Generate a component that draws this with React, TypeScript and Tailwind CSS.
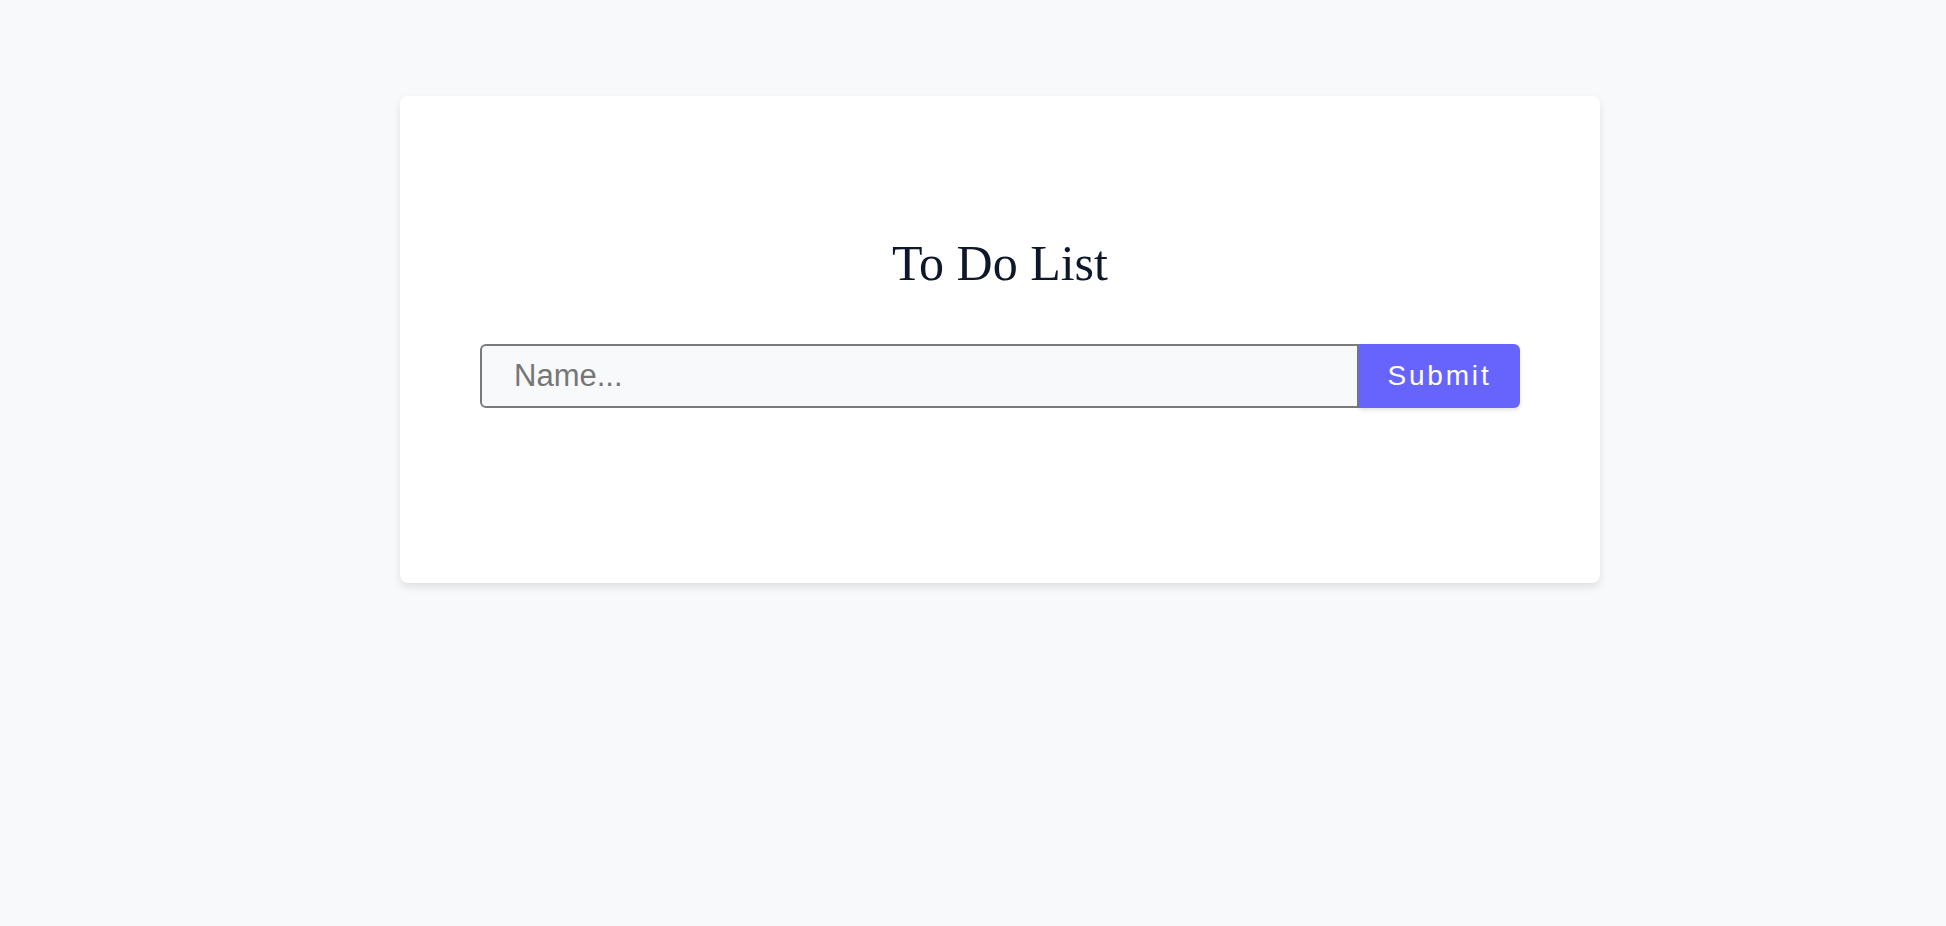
export default function App() {
  return (
    <div className="min-h-[926px] w-full bg-[#f8f9fb] pt-[96px]">
      <div className="ml-[400px] w-[1200px] rounded-lg bg-white px-20 pt-[142px] pb-[175px] shadow-[0_4px_8px_rgba(0,0,0,0.1)]">
        <h1 className="text-center font-['Liberation_Serif',serif] text-[50px] leading-none text-[#0f172a]">
          To Do List
        </h1>
        <form
          className="mt-[56px] flex h-[64px] w-full"
          onSubmit={(e) => e.preventDefault()}
        >
          <input
            type="text"
            placeholder="Name..."
            className="h-full flex-1 rounded-l-md border-2 border-[#7b7b7b] bg-[#f8f9fb] px-8 font-['Liberation_Sans',Arial,sans-serif] text-[31px] text-[#333] outline-none placeholder:text-[#767676]"
          />
          <button
            type="submit"
            className="h-full w-[161px] rounded-r-md bg-[#6764fd] font-['Liberation_Sans',Arial,sans-serif] text-[28px] tracking-[0.1em] text-white shadow-[0_2px_4px_rgba(0,0,0,0.12)]"
          >
            Submit
          </button>
        </form>
      </div>
    </div>
  );
}
